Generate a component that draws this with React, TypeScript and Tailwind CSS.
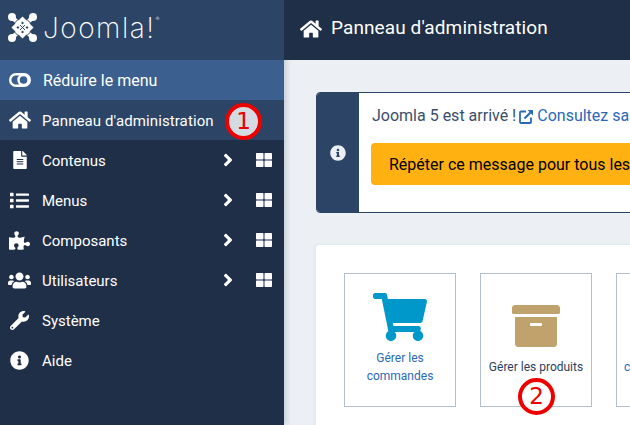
import { FaHome, FaFileAlt, FaList, FaPuzzlePiece, FaUsers, FaWrench, FaInfoCircle, FaAngleRight, FaThLarge, FaShoppingCart, FaArchive } from "react-icons/fa";

const menuItems = [
    { label: "Contenus", icon: <FaFileAlt size={18} />, more: true },
    { label: "Menus", icon: <FaList size={19} />, more: true },
    { label: "Composants", icon: <FaPuzzlePiece size={21} />, more: true },
    { label: "Utilisateurs", icon: <FaUsers size={23} />, more: true },
    { label: "Système", icon: <FaWrench size={19} />, more: false },
    { label: "Aide", icon: <FaInfoCircle size={19} />, more: false },
];

// Joomla mark: crossed bands inside a diamond, with knobs on the corners
function JoomlaLogo() {
    return (
        <svg width="31" height="31" viewBox="0 0 31 31" fill="none">
            <g stroke="white" strokeWidth="4.4">
                <path d="M5 5 L26 26" />
                <path d="M26 5 L5 26" />
                <path d="M15.5 7 L24 15.5 L15.5 24 L7 15.5 Z" strokeWidth="3.6" />
            </g>
            <g stroke="#2c4566" strokeWidth="1">
                <path d="M11 7.5 L7.5 11" />
                <path d="M20 7.5 L23.5 11" />
                <path d="M11 23.5 L7.5 20" />
                <path d="M20 23.5 L23.5 20" />
                <path d="M13 13 L18 18" />
                <path d="M18 13 L13 18" />
            </g>
            <g fill="white">
                <circle cx="5" cy="5" r="4" />
                <circle cx="26" cy="5" r="4" />
                <circle cx="5" cy="26" r="4" />
                <circle cx="26" cy="26" r="4" />
            </g>
        </svg>
    );
}

function ExternalIcon() {
    return (
        <svg width="15" height="15" viewBox="0 0 15 15" fill="none" stroke="currentColor" strokeWidth="1.8">
            <path d="M7 2.5 H2 Q1 2.5 1 3.5 V13 Q1 14 2 14 H11 Q12 14 12 13 V8.5" />
            <path d="M5.5 9.5 L12.5 2.5" strokeWidth="2.2" />
            <path d="M8.5 1 H14 V6.5 Z" fill="currentColor" stroke="none" />
        </svg>
    );
}

export default function App() {
    return (
        <div className="relative w-[630px] h-[425px] overflow-hidden flex bg-[#ecf0f5] font-['Roboto',sans-serif] text-[15px]">
            {/* Sidebar */}
            <aside className="w-[284px] shrink-0 flex flex-col bg-[#1f2f47] text-white shadow-[2px_0_6px_rgba(31,47,71,0.2)]">
                <div className="h-[60px] bg-[#2c4566] flex items-center pl-[7px] pb-[5px] gap-[5px]">
                    <JoomlaLogo />
                    <span className="font-['Inter',sans-serif] font-extralight text-[28px] tracking-[1.5px] leading-none whitespace-nowrap">
                        Joomla!<sup className="text-[6px] tracking-normal align-[14px]">®</sup>
                    </span>
                </div>
                <div className="h-10 bg-[#3b5f8e] flex items-center">
                    <span className="w-[43px] pl-[9px]">
                        <svg width="22" height="14" viewBox="0 0 22 14" fill="none" stroke="white" strokeWidth="2.4">
                            <rect x="1.2" y="1.2" width="19.6" height="11.6" rx="5.8" />
                            <circle cx="14.5" cy="7" r="5" />
                        </svg>
                    </span>
                    <span className="text-base pt-px">Réduire le menu</span>
                </div>
                <div className="h-10 bg-[#2c4566] flex items-center">
                    <span className="w-[42px] pl-[9px]"><FaHome size={22} /></span>
                    <span className="pt-[2px] tracking-[0.1px]">Panneau d'administration</span>
                </div>
                {menuItems.map((item) => (
                    <div key={item.label} className="h-10 flex items-center">
                        <span className="w-[42px] pr-[3px] flex justify-center">{item.icon}</span>
                        <span className="flex-1 pt-[2px]">{item.label}</span>
                        {item.more && (
                            <div className="flex items-center">
                                <FaAngleRight size={20} />
                                <FaThLarge size={16} className="ml-[18px] mr-[12px]" />
                            </div>
                        )}
                    </div>
                ))}
            </aside>

            {/* Main */}
            <main className="flex-1 min-w-0">
                <header className="h-[60px] bg-[#1f2f47] text-white flex items-center pl-[16px] pb-[3px] gap-[9px]">
                    <FaHome size={22} />
                    <h1 className="text-[19px] font-normal tracking-[0.1px]">Panneau d'administration</h1>
                </header>
                <div className="pl-8 pt-8">
                    <div className="w-[400px] h-[121px] flex rounded-[4px] border border-[#2c4566] bg-white overflow-hidden">
                        <div className="w-[42px] shrink-0 bg-[#2c4566] flex items-center justify-center text-[#ecf0f5]">
                            <FaInfoCircle size={16} />
                        </div>
                        <div className="pl-3 pt-[12px] text-[#3a4f6b] text-base whitespace-nowrap">
                            <p className="flex items-center gap-[3px] h-[22px] ml-px">
                                Joomla 5 est arrivé !
                                <span className="flex items-center gap-[3px] text-[#2a69b8]">
                                    <ExternalIcon />
                                    Consultez sa présentation
                                </span>
                            </p>
                            <button className="mt-[16px] w-[300px] h-[42px] rounded-[4px] bg-[#ffb111] text-black text-left pl-[18px] pt-px">
                                Répéter ce message pour tous les utilisateurs
                            </button>
                        </div>
                    </div>
                    <div className="mt-8 w-[400px] h-[200px] bg-white rounded-[4px] p-7 flex gap-6 shadow-[0_0_4px_rgba(31,47,71,0.08)]">
                        <div className="w-[112px] h-[134px] shrink-0 border border-[#b2c0cf] flex flex-col items-center pt-[16px] text-xs text-[#2a69b8] text-center leading-[18px]">
                            <FaShoppingCart size={54} className="text-[#0098cb]" />
                            <p className="mt-[5px] w-[90px]">Gérer les commandes</p>
                        </div>
                        <div className="w-[112px] h-[134px] shrink-0 border border-[#b2c0cf] flex flex-col items-center pt-[28px] text-xs text-[#2b3f5c] text-center leading-[18px]">
                            <FaArchive size={48} className="text-[#bfa26c]" />
                            <p className="mt-[8px]">Gérer les produits</p>
                        </div>
                        <div className="w-[112px] h-[134px] shrink-0 border border-[#b2c0cf] flex justify-center pt-[84px] pl-[6px] text-xs leading-[18px] text-[#2a69b8] whitespace-nowrap">
                            codes de réduction
                        </div>
                    </div>
                </div>
            </main>

            {/* Annotation markers */}
            <div className="absolute left-[225px] top-[103px] w-[37px] h-[37px] rounded-full border-[4px] border-[#ee0000] bg-[#d5dbe3] text-[#ee0000] text-[23px] flex items-center justify-center font-['DejaVu_Sans',sans-serif]">1</div>
            <div className="absolute left-[518px] top-[378px] w-[37px] h-[37px] rounded-full border-[4px] border-[#ee0000] bg-white text-[#ee0000] text-[23px] flex items-center justify-center font-['DejaVu_Sans',sans-serif]">2</div>
        </div>
    );
}
